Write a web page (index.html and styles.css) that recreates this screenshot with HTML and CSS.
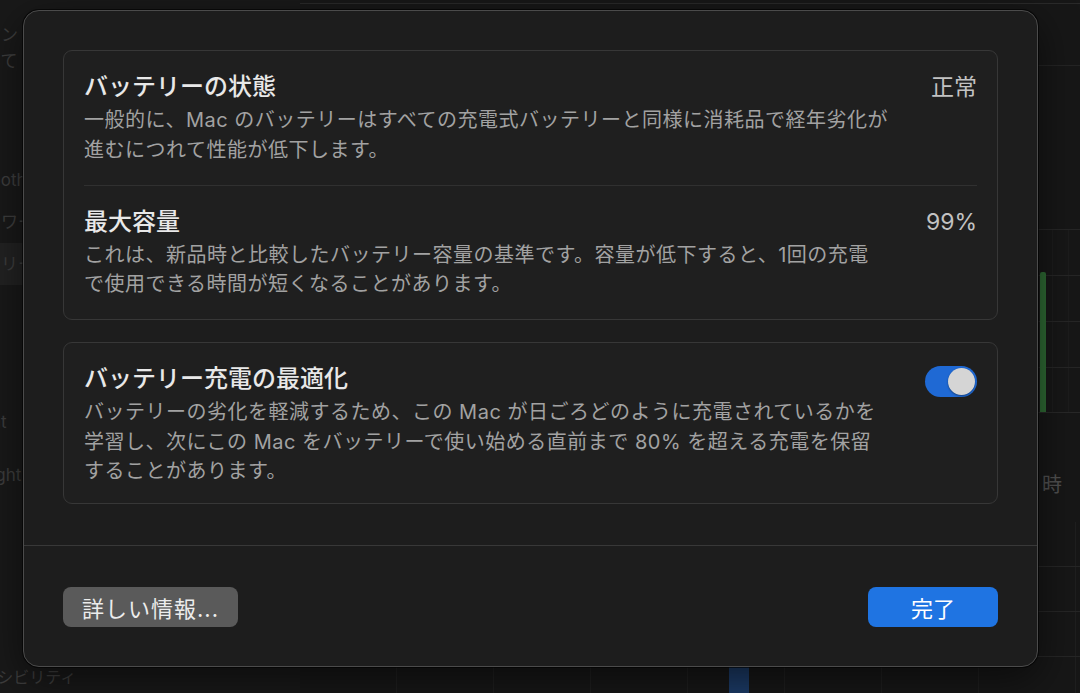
FILE: index.html
```html
<!DOCTYPE html>
<html lang="ja">
<head>
    <meta charset="UTF-8">
    <meta name="viewport" content="width=device-width, initial-scale=1.0">
    <title>バッテリーの状態</title>
    <link rel="stylesheet" href="styles.css">
</head>
<body>
<div class="window">
    <aside class="sidebar">
        <div class="side-item small first">ログイン</div>
        <div class="side-item small shifted">設定について</div>
        <div class="side-item gap-bt">Bluetooth</div>
        <div class="side-item">ネットワーク</div>
        <div class="side-item active">バッテリー</div>
        <div class="side-item gap-gc">Accent</div>
        <div class="side-item gap-sp">Spotlight</div>
        <div class="side-item gap-ax">アクセシビリティ</div>
    </aside>
    <section class="pane">
        <div class="pane-top"></div>
        <div class="pane-head"></div>
        <div class="pane-gap"></div>
        <div class="chart-level">
            <div class="bar-green"></div>
        </div>
        <div class="axis">時</div>
        <div class="chart-usage">
            <div class="bar-blue"></div>
        </div>
    </section>
</div>

<div class="sheet">
    <div class="sheet-body">
        <div class="card card-info">
            <div class="row">
                <div class="row-text">
                    <h2>バッテリーの状態</h2>
                    <p>一般的に、Mac のバッテリーはすべての充電式バッテリーと同様に消耗品で経年劣化が<br>進むにつれて性能が低下します。</p>
                </div>
                <div class="row-value">正常</div>
            </div>
            <div class="divider"></div>
            <div class="row">
                <div class="row-text">
                    <h2>最大容量</h2>
                    <p>これは、新品時と比較したバッテリー容量の基準です。容量が低下すると、1回の充電<br>で使用できる時間が短くなることがあります。</p>
                </div>
                <div class="row-value">99%</div>
            </div>
        </div>
        <div class="card card-option">
            <div class="row">
                <div class="row-text">
                    <h2>バッテリー充電の最適化</h2>
                    <p>バッテリーの劣化を軽減するため、この Mac が日ごろどのように充電されているかを<br>学習し、次にこの Mac をバッテリーで使い始める直前まで 80% を超える充電を保留<br>することがあります。</p>
                </div>
                <div class="toggle"><div class="knob"></div></div>
            </div>
        </div>
    </div>
    <div class="sheet-footer">
        <button class="btn btn-secondary">詳しい情報...</button>
        <button class="btn btn-primary">完了</button>
    </div>
</div>
</body>
</html>
```

FILE: styles.css
```css
* {
    margin: 0;
    padding: 0;
    box-sizing: border-box;
}

body {
    width: 1080px;
    height: 693px;
    overflow: hidden;
    position: relative;
    background: #161616;
    font-family: Inter, "Noto Sans CJK JP", sans-serif;
}

/* dimmed settings window behind the sheet */
.window {
    display: flex;
    height: 693px;
}

.sidebar {
    flex: 0 0 360px;
    margin-left: -60px;
    padding-top: 22px;
    background: #191919;
    color: #3d3d3d;
    font-size: 17px;
}

.side-item {
    height: 42px;
    line-height: 42px;
    padding-left: 10px;
    white-space: nowrap;
}

.side-item.small {
    height: 26px;
    line-height: 26px;
}

.side-item.shifted {
    text-indent: -34px;
}

.side-item.active {
    background: #222222;
}

.gap-bt { margin-top: 85px; }
.gap-gc { margin-top: 116px; }
.gap-sp { margin-top: 11px; }
.gap-ax { margin-top: 160px; font-size: 16px; }

.pane {
    flex: 1;
    display: flex;
    flex-direction: column;
    background: #171717;
}

.pane-top {
    height: 4px;
    border-bottom: 1px solid #2a2a2a;
}

.pane-head {
    height: 62px;
    border-bottom: 1px solid #242424;
}

.pane-gap {
    height: 163px;
}

.chart-level {
    height: 184px;
    display: flex;
    align-items: flex-end;
    justify-content: flex-end;
    padding-right: 34px;
    border-bottom: 1px solid #282828;
    background:
        repeating-linear-gradient(to bottom, #262626 0 1px, transparent 1px 46px),
        repeating-linear-gradient(to right, #1c1c1c 0 1px, transparent 1px 16px);
}

.bar-green {
    width: 6px;
    height: 140px;
    background: #2e6a34;
    border-radius: 2px 2px 0 0;
}

.axis {
    height: 109px;
    padding: 56px 18px 0 0;
    text-align: right;
    color: #4f4f4f;
    font-size: 20px;
}

.chart-usage {
    flex: 1;
    display: flex;
    align-items: flex-end;
    padding-left: 429px;
    background:
        repeating-linear-gradient(to bottom, transparent 0 44px, #262626 44px 45px),
        repeating-linear-gradient(to right, transparent 0 96px, #1f1f1f 96px 97px);
}

.bar-blue {
    width: 20px;
    height: 40px;
    background: #1c3b67;
}

/* modal sheet */
.sheet {
    position: absolute;
    left: 23px;
    top: 10px;
    width: 1015px;
    height: 657px;
    display: flex;
    flex-direction: column;
    background: #1d1d1d;
    border: 1px solid #4b4b4b;
    border-radius: 16px;
    box-shadow: 0 0 0 1px rgba(0, 0, 0, 0.6), 0 12px 40px rgba(0, 0, 0, 0.55);
}

.sheet-body {
    flex: 1;
    display: flex;
    flex-direction: column;
    gap: 22px;
    padding: 39px 39px 0;
}

.card {
    background: #1f1f1f;
    border: 1px solid #373737;
    border-radius: 9px;
}

.row {
    display: flex;
    justify-content: space-between;
    align-items: flex-start;
    padding: 22px 20px 19.5px;
}

.card-option .row {
    padding-bottom: 16px;
}

.row h2 {
    font-size: 24px;
    line-height: 28px;
    font-weight: 500;
    color: #e8e8e8;
    margin-bottom: 5px;
}

.row p {
    font-size: 20px;
    line-height: 29.5px;
    letter-spacing: 0.5px;
    color: #a2a2a2;
    white-space: nowrap;
}

.row-value {
    font-size: 23px;
    line-height: 28px;
    color: #c2c2c2;
}

.divider {
    height: 1px;
    margin: 0 20px;
    background: #303030;
}

.toggle {
    width: 52px;
    height: 31px;
    margin-top: 1px;
    padding: 2px;
    border-radius: 16px;
    background: #1f69d4;
    display: flex;
    justify-content: flex-end;
}

.knob {
    width: 27px;
    height: 27px;
    border-radius: 50%;
    background: #d5d5d5;
    box-shadow: 0 1px 2px rgba(0, 0, 0, 0.4);
}

.sheet-footer {
    flex: 0 0 121px;
    display: flex;
    justify-content: space-between;
    align-items: flex-start;
    padding: 41px 39px 0;
    border-top: 1px solid #383838;
}

.btn {
    height: 40px;
    border: none;
    border-radius: 8px;
    font-family: inherit;
    font-size: 22px;
    color: #ececec;
}

.btn-secondary {
    width: 175px;
    background: #5a5a5a;
    letter-spacing: 1px;
}

.btn-primary {
    width: 130px;
    background: #1f74e2;
    color: #ffffff;
}
```
